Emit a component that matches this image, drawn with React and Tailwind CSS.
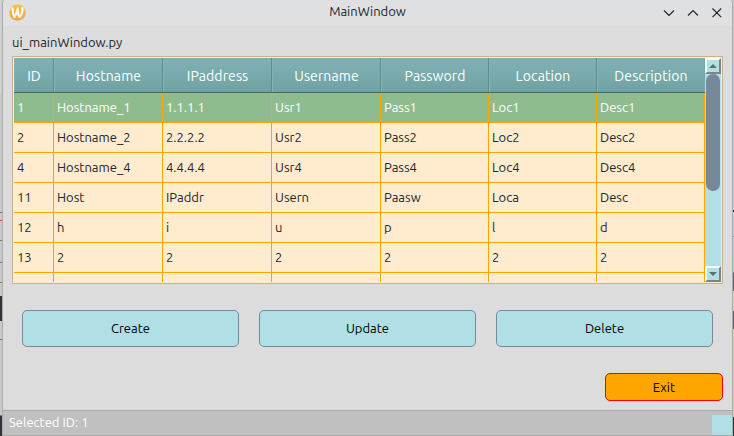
import React from "react";

const columns = ["ID", "Hostname", "IPaddress", "Username", "Password", "Location", "Description"];
const rows = [
  ["1", "Hostname_1", "1.1.1.1", "Usr1", "Pass1", "Loc1", "Desc1"],
  ["2", "Hostname_2", "2.2.2.2", "Usr2", "Pass2", "Loc2", "Desc2"],
  ["4", "Hostname_4", "4.4.4.4", "Usr4", "Pass4", "Loc4", "Desc4"],
  ["11", "Host", "IPaddr", "Usern", "Paasw", "Loca", "Desc"],
  ["12", "h", "i", "u", "p", "l", "d"],
  ["13", "2", "2", "2", "2", "2", "2"],
  ["", "", "", "", "", "", ""],
];
const grid = "grid grid-cols-[40px_109px_109px_109px_108px_108px_108px]";

function WaylandLogo() {
  return (
    <svg width="17" height="17" viewBox="0 0 17 17">
      <defs>
        <linearGradient id="sun" x1="0" y1="0" x2="0" y2="1">
          <stop offset="0" stopColor="#fbc350" />
          <stop offset="1" stopColor="#f2a63a" />
        </linearGradient>
      </defs>
      <circle cx="8.5" cy="8.5" r="8.3" fill="url(#sun)" />
      <path d="M3.4 4.2 C3.7 7.2 4.2 10.5 5.4 12.9 C6.8 11.6 7.9 8.4 8.6 4.6 C8.8 8.2 9.4 11.2 10.6 12.9 C12.5 11.4 13.6 7.6 13.5 4" fill="none" stroke="#fff" strokeWidth="2.1" strokeLinecap="round" strokeLinejoin="round" />
    </svg>
  );
}

function WindowControls() {
  return (
    <svg width="60" height="16" viewBox="0 0 60 16" fill="none" stroke="#25282b" strokeWidth="1.2">
      <path d="M2 5.5 L7 10.5 L12 5.5 M26 10.5 L31 5.5 L36 10.5 M50.5 3.5 L59.2 12.2 M59.2 3.5 L50.5 12.2" />
    </svg>
  );
}

function ArrowButton({ up }) {
  return (
    <div className="flex h-4 w-4 shrink-0 items-center justify-center border-2 border-t-[#f3fbfc] border-r-[#7b8586] border-b-[#7b8586] border-l-[#f3fbfc] bg-[#b0e0e6]">
      <svg width="8" height="4" viewBox="0 0 8 4">
        <path d={up ? "M0 4 L4 0 L8 4Z" : "M0 0 L4 4 L8 0Z"} fill="#587073" />
      </svg>
    </div>
  );
}

function ActionButton({ children }) {
  return (
    <button className="h-[37px] w-[217px] rounded-[5px] border border-[#778899] bg-[#b0e0e6] pb-[2px] text-center text-black">
      {children}
    </button>
  );
}

export default function App() {
  return (
    <div className="flex h-[436px] w-[734px] overflow-hidden bg-[#c9c9c9] font-['Ubuntu','Noto_Sans',sans-serif] text-[13px] leading-[18px] text-[#232629]">
      <div className="flex w-[2px] flex-col">
        <div className="h-[93px] bg-[#d0d0d0]" />
        <div className="h-[120px] border-b border-[#77797c]" />
        <div className="h-[8px] border-b border-[#d35050]" />
        <div className="h-[20px] border-b border-[#77797c]" />
        <div className="h-[22px] border-b border-[#77797c]" />
        <div className="h-[20px] border-b border-[#77797c]" />
        <div className="h-[13px]" />
        <div className="h-[25px] bg-[#303235]" />
        <div className="h-[19px] border-b border-[#77797c]" />
        <div className="h-[76px] border-b border-[#77797c]" />
        <div className="h-[20px] bg-[#303235]" />
      </div>
      <div className="flex w-[731px] flex-col rounded-t-[3px] border-x border-[#a9abad] bg-[#dcdcdc]">
        <div className="grid h-[26px] shrink-0 grid-cols-[60px_1fr_60px] items-center rounded-t-[3px] bg-[#dee0e2] pr-[10px] pl-[6px]">
          <div className="pb-[2px]"><WaylandLogo /></div>
          <div className="pb-[5px] pl-[4px] text-center">MainWindow</div>
          <div className="pb-[1px]"><WindowControls /></div>
        </div>
        <div className="flex h-[30px] shrink-0 items-center pt-[1px] pl-[9px]">ui_mainWindow.py</div>
        <div className="ml-[9px] flex h-[228px] w-[711px] shrink-0 border border-[#c8b090] bg-[#ffebcd] p-px">
          <div className="h-[224px] w-[691px] overflow-hidden">
            <div className={grid + " h-[35px] border-b border-[#42686b] bg-linear-to-b from-[#7fb2b4] to-[#70a2a4] text-[14px] tracking-[0.1px] text-white"}>
              {columns.map((c) => (
                <div key={c} className="flex items-center justify-center border-r border-l border-r-[#5f8b8e] border-l-[#84b4b6] pt-[2px] last:border-r-[#76a8aa]">{c}</div>
              ))}
            </div>
            {rows.map((r, i) => (
              <div key={i} className={grid + " h-[30px] " + (i === 0 ? "bg-[#8fbc8f] text-white" : "bg-[#ffebcd]")}>
                {r.map((v, j) => (
                  <div key={j} className="flex items-center border-r border-b border-[#ffa500] pb-[2px] pl-[3px]">{v}</div>
                ))}
              </div>
            ))}
          </div>
          <div className="flex w-4 flex-col bg-[#b0e0e6]">
            <ArrowButton up />
            <div className="ml-px h-[117px] w-[14px] rounded-[7px] bg-[#778899]" />
            <div className="flex-1" />
            <ArrowButton />
          </div>
        </div>
        <div className="mt-[26px] flex shrink-0 gap-5 pl-[19px]">
          <ActionButton>Create</ActionButton>
          <ActionButton>Update</ActionButton>
          <ActionButton>Delete</ActionButton>
        </div>
        <div className="mt-[26px] flex shrink-0 justify-end pr-[9px]">
          <button className="h-[28px] w-[118px] rounded-[5px] border border-[#ff0000] bg-[#ffa500] text-black">Exit</button>
        </div>
        <div className="mt-[9px] flex h-[26px] shrink-0 items-end justify-between border-y border-[#a9a9a9] bg-[#c0c0c0] text-white">
          <span className="pb-[4px] pl-[6px]">Selected ID: 1</span>
          <div className="h-5 w-5 bg-[#b0e0e6]" />
        </div>
      </div>
      <div className="flex w-px flex-col">
        <div className="h-[210px]" />
        <div className="h-[2px] bg-[#333333]" />
        <div className="h-[24px]" />
        <div className="h-[37px] border-y border-[#909090]" />
        <div className="h-[18px] bg-[#606265]" />
        <div className="h-[20px] bg-[#d8d0bd]" />
        <div className="h-[18px] bg-[#606265]" />
        <div className="h-[88px] bg-[#d0d2ad]" />
        <div className="h-[19px] bg-[#303235]" />
      </div>
    </div>
  );
}
